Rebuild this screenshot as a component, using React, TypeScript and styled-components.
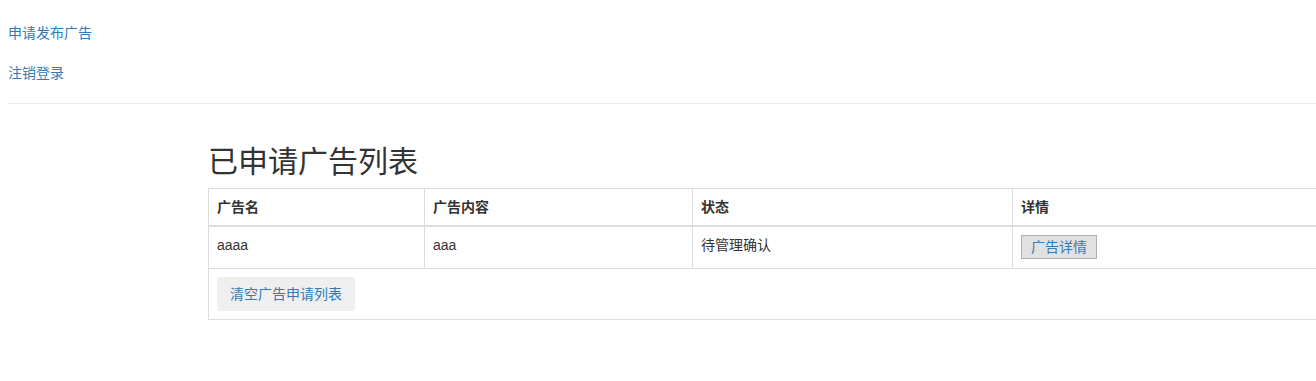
import React from 'react'
import styled, { createGlobalStyle } from 'styled-components';

const GlobalStyle = createGlobalStyle`
	html, body {
		margin: 0;
		padding: 0;
		background: #fff;
		overflow: hidden;
	}
	body {
		font-family: "Liberation Sans", "Noto Sans CJK SC", sans-serif;
		font-size: 14px;
		line-height: 20px;
		color: #333;
	}
`;

const Page = styled.div`
	width: 1316px;
	padding: 23px 8px 0;
	box-sizing: border-box;
`;

const NavList = styled.ul`
	list-style: none;
	margin: 0;
	padding: 0;
	display: flex;
	flex-direction: column;
	gap: 20px;
`;

const NavLink = styled.a`
	color: #337ab7;
	text-decoration: none;
	font-size: 14px;
	line-height: 20px;
`;

const Divider = styled.hr`
	border: 0;
	border-top: 1px solid #eee;
	margin: 20px 0 0;
	width: 1400px;
`;

const Content = styled.div`
	padding-left: 200px;
`;

const Title = styled.h2`
	font-size: 30px;
	font-weight: 400;
	line-height: 33px;
	margin: 41px 0 10px;
	color: #333;
`;

const Table = styled.table`
	border-collapse: collapse;
	width: 1400px;
	table-layout: fixed;
	border: 1px solid #ddd;
`;

const HeadCell = styled.th<{ w?: number }>`
	width: ${({ w }) => (w ? `${w}px` : 'auto')};
	text-align: left;
	font-weight: 700;
	padding: 8px;
	line-height: 20px;
	height: 20px;
	border: 1px solid #ddd;
	border-bottom: 2px solid #ddd;
`;

const Cell = styled.td<{ h: number }>`
	padding: 8px;
	line-height: 20px;
	height: ${({ h }) => h}px;
	vertical-align: top;
	border: 1px solid #ddd;
`;

const DetailButton = styled.button`
	font-family: "Liberation Sans", "Noto Sans CJK SC", sans-serif;
	font-size: 14px;
	line-height: 18px;
	height: 24px;
	padding: 1px 9px;
	margin-top: 0;
	background: #e1e1e1;
	border: 1px solid #adadad;
	color: #337ab7;
	border-radius: 0;
`;

const ClearButton = styled.button`
	font-family: "Liberation Sans", "Noto Sans CJK SC", sans-serif;
	font-size: 14px;
	line-height: 20px;
	padding: 6px 12px;
	height: 34px;
	background: #efefef;
	border: 1px solid transparent;
	border-radius: 4px;
	color: #337ab7;
`;

const ads = [{ name: 'aaaa', content: 'aaa', status: '待管理确认' }];

function App() {
	return (
		<>
			<GlobalStyle />
			<Page>
				<NavList>
					<li><NavLink href="#">申请发布广告</NavLink></li>
					<li><NavLink href="#">注销登录</NavLink></li>
				</NavList>
				<Divider />
				<Content>
					<Title>已申请广告列表</Title>
					<Table>
						<thead>
							<tr>
								<HeadCell w={199}>广告名</HeadCell>
								<HeadCell w={251}>广告内容</HeadCell>
								<HeadCell w={303}>状态</HeadCell>
								<HeadCell>详情</HeadCell>
							</tr>
						</thead>
						<tbody>
							{ads.map((ad, index) => (
								<tr key={index}>
									<Cell h={25}>{ad.name}</Cell>
									<Cell h={25}>{ad.content}</Cell>
									<Cell h={25}>{ad.status}</Cell>
									<Cell h={25}><DetailButton>广告详情</DetailButton></Cell>
								</tr>
							))}
							<tr>
								<Cell h={34} colSpan={4}><ClearButton>清空广告申请列表</ClearButton></Cell>
							</tr>
						</tbody>
					</Table>
				</Content>
			</Page>
		</>
	)
}

export default App
